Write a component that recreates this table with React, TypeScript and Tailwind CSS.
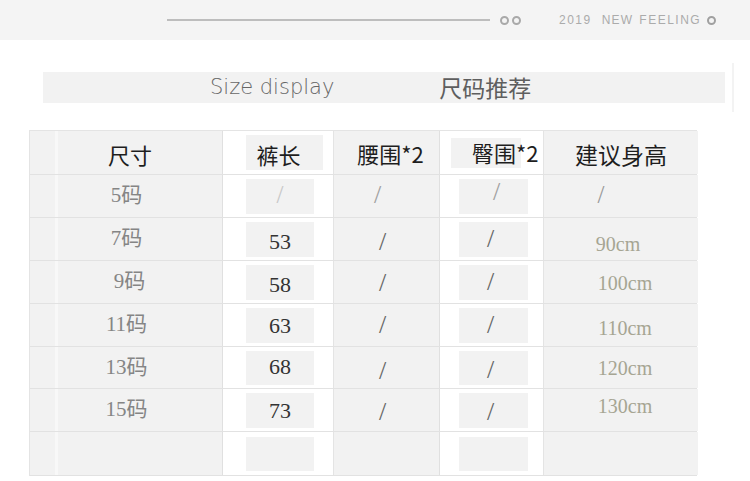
import React from "react";

const serif = "font-['Liberation_Serif','Noto_Sans_CJK_SC',serif]";
const cjk = "font-['Noto_Sans_CJK_SC','Noto_Sans',sans-serif]";

type RowProps = {
  h: string;
  label: string;
  labelCls: string;
  len: string;
  lenCls: string;
  waistCls: string;
  hipCls: string;
  height: string;
  heightCls: string;
  boxH: string;
};

function Row(p: RowProps) {
  const lenIsSlash = p.len === "/";
  return (
    <div className={`grid grid-cols-[28px_165px_111px_106px_104px_154px] ${p.h} border-b border-[#e2e2e2]`}>
      <div className="bg-[#f2f2f2] border-r-[3px] border-[#f8f8f8]" />
      <div className={`bg-[#f2f2f2] border-r border-[#e0e0e0] flex items-center justify-center pr-[27px] text-[21px] text-[#858585] ${serif}`}>
        <span className={p.labelCls}>{p.label}</span>
      </div>
      <div className="bg-white border-r border-[#e4e4e4] flex items-center pl-[23px]">
        <div className={`w-[68px] ${p.boxH} bg-[#f2f2f2] flex items-center justify-center ${lenIsSlash ? "text-[25px]" : "text-[22px]"} ${serif}`}>
          <span className={p.lenCls}>{p.len}</span>
        </div>
      </div>
      <div className={`bg-[#f2f2f2] border-r border-[#e0e0e0] flex items-center justify-center pr-[8px] text-[26px] leading-none ${serif}`}>
        <span className={p.waistCls}>/</span>
      </div>
      <div className="bg-white border-r border-[#e4e4e4] flex items-center pl-[19px]">
        <div className={`w-[69px] ${p.boxH} bg-[#f2f2f2] flex items-center justify-center text-[26px] leading-none ${serif}`}>
          <span className={p.hipCls}>{p.len === "" ? "" : "/"}</span>
        </div>
      </div>
      <div className={`bg-[#f2f2f2] flex items-center justify-center ${p.height === "/" ? "text-[25px]" : "text-[20px]"} ${serif}`}>
        <span className={p.heightCls}>{p.height}</span>
      </div>
    </div>
  );
}

export default function App() {
  return (
    <div className="w-[750px] h-[481px] bg-white overflow-hidden flex flex-col">
      {/* top band */}
      <div className="h-[40px] bg-[#f4f4f4] flex items-center shrink-0">
        <div className="ml-[167px] w-[323px] h-[2px] bg-[#bdbdbd]" />
        <div className="ml-[10px] flex gap-[3px]">
          <span className="w-[9px] h-[9px] rounded-full border-2 border-[#a9a9a9]" />
          <span className="w-[9px] h-[9px] rounded-full border-2 border-[#a9a9a9]" />
        </div>
        <span className="ml-[38px] text-[12px] tracking-[1.5px] text-[#ababab] font-['Liberation_Sans',sans-serif]">2019</span>
        <span className="ml-[10px] text-[12px] tracking-[1.2px] text-[#ababab] font-['Liberation_Sans',sans-serif]">NEW</span>
        <span className="ml-[6px] text-[12px] tracking-[1.5px] text-[#ababab] font-['Liberation_Sans',sans-serif]">FEELING</span>
        <span className="ml-[6px] w-[9px] h-[9px] rounded-full border-2 border-[#a0a0a0]" />
      </div>

      {/* title band */}
      <div className="mt-[23px] h-[49px] flex shrink-0">
        <div className="ml-[43px] mt-[9px] w-[682px] h-[31px] bg-[#f2f2f2] flex items-center">
          <span className="ml-[167px] text-[21px] text-[#666] font-['DejaVu_Sans',sans-serif] font-light leading-none">Size display</span>
          <span className={`ml-[105px] text-[23px] text-[#5e5e5e] leading-none ${cjk}`}>尺码推荐</span>
        </div>
        <div className="ml-[7px] w-[2px] h-[49px] bg-[#f3f3f3]" />
      </div>

      {/* table */}
      <div className="mt-[18px] ml-[29px] w-[668px] flex flex-col border-t border-[#e4e4e4] border-l shrink-0">
        {/* header */}
        <div className={`grid grid-cols-[28px_165px_111px_106px_104px_154px] h-[44px] border-b border-[#e2e2e2] text-[22px] text-[#1e1e1e] ${cjk}`}>
          <div className="bg-[#f2f2f2] border-r-[3px] border-[#f8f8f8]" />
          <div className="bg-[#f2f2f2] border-r border-[#e0e0e0] flex items-center justify-center pr-[20px]">
            <span className="translate-y-[2px]">尺寸</span>
          </div>
          <div className="bg-white border-r border-[#e4e4e4] flex items-center pl-[23px]">
            <div className="w-[77px] h-[35px] bg-[#f2f2f2] flex items-center justify-center pr-[12px]">
              <span className="translate-y-[2px]">裤长</span>
            </div>
          </div>
          <div className="bg-[#f2f2f2] border-r border-[#e0e0e0] flex items-center justify-center pl-[8px] whitespace-nowrap">
            <span className="translate-y-[1px]">腰围*2</span>
          </div>
          <div className="bg-white border-r border-[#e4e4e4] flex items-center pl-[11px]">
            <div className="w-[70px] h-[30px] bg-[#f2f2f2] flex items-center justify-start">
              <span className="ml-[21px] whitespace-nowrap">臀围*2</span>
            </div>
          </div>
          <div className="bg-[#f2f2f2] flex items-center justify-center">
            <span className="translate-y-[2px] text-[23px]">建议身高</span>
          </div>
        </div>

        <Row h="h-[43px]" boxH="h-[35px]" label="5码" labelCls="" len="/" lenCls="text-[#c8c8c8] -translate-y-[1px]" waistCls="text-[#a0a0a0] -translate-x-[5px] -translate-y-[1px]" hipCls="text-[#a0a0a0] -translate-y-[4px] translate-x-[3px]" height="/" heightCls="text-[#9a9a9a] -translate-x-[20px] -translate-y-[1px]" />
        <Row h="h-[43px]" boxH="h-[35px]" label="7码" labelCls="" len="53" lenCls="text-[#333] translate-y-[2px]" waistCls="text-[#666] translate-y-[3px]" hipCls="text-[#666] -translate-x-[3px]" height="90cm" heightCls="text-[#a6a593] translate-y-[5px] -translate-x-[3px]" />
        <Row h="h-[43px]" boxH="h-[35px]" label="9码" labelCls="translate-x-[3px]" len="58" lenCls="text-[#333] translate-y-[2px]" waistCls="text-[#666] translate-y-[1px]" hipCls="text-[#666] -translate-x-[3px]" height="100cm" heightCls="text-[#a6a593] translate-y-[1px] translate-x-[4px]" />
        <Row h="h-[43px]" boxH="h-[35px]" label="11码" labelCls="" len="63" lenCls="text-[#333]" waistCls="text-[#666]" hipCls="text-[#666] -translate-x-[3px]" height="110cm" heightCls="text-[#a6a593] translate-y-[3px] translate-x-[4px]" />
        <Row h="h-[42px]" boxH="h-[34px]" label="13码" labelCls="" len="68" lenCls="text-[#333] -translate-y-[1px]" waistCls="text-[#666] translate-y-[3px]" hipCls="text-[#666] translate-y-[2px] -translate-x-[3px]" height="120cm" heightCls="text-[#a6a593] translate-x-[4px]" />
        <Row h="h-[43px]" boxH="h-[35px]" label="15码" labelCls="" len="73" lenCls="text-[#333]" waistCls="text-[#666] translate-y-[2px]" hipCls="text-[#666] translate-y-[2px] -translate-x-[3px]" height="130cm" heightCls="text-[#a6a593] -translate-y-[4px] translate-x-[4px]" />
        <Row h="h-[44px]" boxH="h-[34px]" label="" labelCls="" len="" lenCls="" waistCls="hidden" hipCls="" height="" heightCls="" />
      </div>
    </div>
  );
}
